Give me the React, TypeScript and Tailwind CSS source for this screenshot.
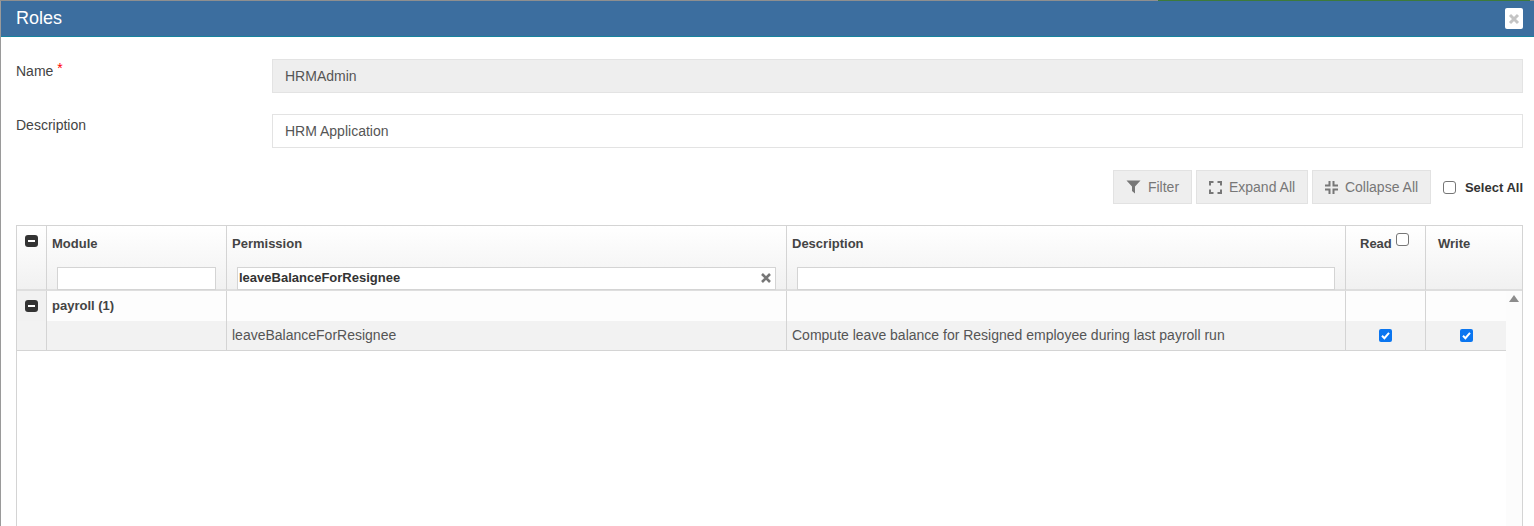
import React from "react";

function Minus() {
  return (
    <span className="flex h-[12px] w-[13px] items-center justify-center rounded-[3px] bg-[#333333]">
      <span className="h-[2px] w-[7px] bg-white" />
    </span>
  );
}

function Blue() {
  return (
    <span className="flex h-[13px] w-[13px] items-center justify-center rounded-[2px] bg-[#0b76f0]">
      <svg width="11" height="11" viewBox="0 0 11 11" fill="none">
        <path d="M2 5.8 L4.4 8.2 L9 2.8" stroke="white" strokeWidth="2" />
      </svg>
    </span>
  );
}

function Box() {
  return <span className="block h-[13px] w-[13px] rounded-[3px] border border-[#767676] bg-white" />;
}

function ToolButton({ icon, label, w }: { icon: React.ReactNode; label: string; w: string }) {
  return (
    <div className={`flex h-[34px] items-center gap-[7px] border border-[#e2e2e2] bg-[#eeeeee] pl-[12px] text-[14px] text-[#777777] ${w}`}>
      {icon}
      <span>{label}</span>
    </div>
  );
}

const cell = "border-r border-[#d4d4d4]";

export default function App() {
  return (
    <div className="h-[526px] w-[1534px] overflow-hidden bg-white font-['Liberation_Sans',Arial,sans-serif] text-[14px] text-[#333333]">
      <div className="flex h-[1px] bg-[#8f8f8f]">
        <div className="w-[1158px]" />
        <div className="w-[372px] bg-[#3d7a3a]" />
      </div>
      <div className="h-[525px] border-l border-[#9a9a9a]">
        <div className="flex h-[36px] items-center justify-between border-b border-[#17839e] bg-[#3c6e9f] pl-[15px] pr-[11px]">
          <span className="text-[18px] text-white">Roles</span>
          <span className="flex h-[21px] w-[18px] items-center justify-center rounded-[2px] bg-white text-[#c4c4c4]">
            <svg width="12" height="12" viewBox="0 0 12 12"><path d="M2 2 L10 10 M10 2 L2 10" stroke="currentColor" strokeWidth="3" /></svg>
          </span>
        </div>

        <div className="px-[15px] pr-[11px]">
          <div className="mt-[22px] flex h-[34px]">
            <div className="w-[256px] pt-[2px] text-[14px] text-[#444444]">
              Name <span className="relative -top-[3px] text-[#ff0000]">*</span>
            </div>
            <div className="flex flex-1 items-center border border-[#e3e3e3] bg-[#eeeeee] pl-[12px] text-[#555555]">HRMAdmin</div>
          </div>
          <div className="mt-[21px] flex h-[34px]">
            <div className="w-[256px] pt-[1px] text-[#444444]">Description</div>
            <div className="flex flex-1 items-center border border-[#e3e3e3] pl-[12px] text-[#555555]">HRM Application</div>
          </div>

          <div className="mt-[22px] flex h-[34px] items-start justify-end">
            <ToolButton
              w="w-[79px]"
              label="Filter"
              icon={
                <svg width="15" height="14" viewBox="0 0 15 14"><path d="M0.5 0.5 H14.5 L9 6.5 V13.5 L6 11 V6.5 Z" fill="#777777" /></svg>
              }
            />
            <div className="w-[4px]" />
            <ToolButton
              w="w-[112px]"
              label="Expand All"
              icon={
                <svg width="13" height="13" viewBox="0 0 13 13" fill="none" stroke="#777777" strokeWidth="2"><path d="M1 4.5 V1 H4.5 M8.5 1 H12 V4.5 M12 8.5 V12 H8.5 M4.5 12 H1 V8.5" /></svg>
              }
            />
            <div className="w-[4px]" />
            <ToolButton
              w="w-[119px]"
              label="Collapse All"
              icon={
                <svg width="13" height="13" viewBox="0 0 13 13" fill="none" stroke="#777777" strokeWidth="2"><path d="M0 4.5 H4.5 V0 M8.5 0 V4.5 H13 M13 8.5 H8.5 V13 M4.5 13 V8.5 H0" /></svg>
              }
            />
            <label className="ml-[12px] flex items-center pt-[8px] text-[#333333]">
              <Box />
              <span className="ml-[9px] text-[13px] font-bold">Select All</span>
            </label>
          </div>

          <div className="mt-[21px] h-[302px] border border-[#d4d4d4]">
            <div className="grid h-[65px] grid-cols-[30px_180px_560px_559px_80px_1fr] border-b-2 border-[#dedede] bg-gradient-to-b from-white to-[#f1f1f1] text-[13px] font-bold text-[#444444]">
              <div className={`${cell} flex justify-center pt-[9px]`}><Minus /></div>
              <div className={`${cell} pl-[5px] pt-[8px]`}>
                <div>Module</div>
                <div className="ml-[5px] mt-[13px] h-[23px] w-[159px] border border-[#d4d4d4] bg-white" />
              </div>
              <div className={`${cell} pl-[5px] pt-[8px]`}>
                <div>Permission</div>
                <div className="ml-[5px] mt-[13px] flex h-[23px] w-[539px] items-center justify-between border border-[#d4d4d4] bg-white pl-[1px] pr-[4px] text-[#333333]">
                  <span>leaveBalanceForResignee</span>
                  <svg width="10" height="10" viewBox="0 0 10 10"><path d="M1 1 L9 9 M9 1 L1 9" stroke="#777777" strokeWidth="2.6" /></svg>
                </div>
              </div>
              <div className={`${cell} pl-[5px] pt-[8px]`}>
                <div>Description</div>
                <div className="ml-[5px] mt-[13px] h-[23px] w-[538px] border border-[#d4d4d4] bg-white" />
              </div>
              <div className={`${cell} flex items-start pl-[14px] pt-[8px]`}>
                <span>Read</span>
                <span className="ml-[4px] mt-[-1px]"><Box /></span>
              </div>
              <div className="pl-[12px] pt-[8px]">Write</div>
            </div>

            <div className="flex h-[235px]">
              <div className="w-[1489px]">
                <div className="grid h-[30px] grid-cols-[30px_180px_560px_559px_80px_1fr] bg-[#fdfdfd] text-[13px] font-bold text-[#444444]">
                  <div className={`${cell} flex items-center justify-center bg-[#f1f1f1]`}><Minus /></div>
                  <div className={`${cell} flex items-center pl-[5px]`}>payroll (1)</div>
                  <div className={cell} />
                  <div className={cell} />
                  <div className={cell} />
                  <div />
                </div>
                <div className="grid h-[30px] grid-cols-[30px_180px_560px_559px_80px_1fr] border-b border-[#d4d4d4] bg-[#f2f2f2] text-[#555555]">
                  <div className={cell} />
                  <div className={cell} />
                  <div className={`${cell} flex items-center pl-[5px]`}>leaveBalanceForResignee</div>
                  <div className={`${cell} flex items-center pl-[5px]`}>Compute leave balance for Resigned employee during last payroll run</div>
                  <div className={`${cell} flex items-center justify-center`}><Blue /></div>
                  <div className="flex items-center justify-center"><Blue /></div>
                </div>
              </div>
              <div className="flex flex-1 justify-center bg-[#fcfcfc] pt-[4px]">
                <span className="h-0 w-0 border-x-[5px] border-b-[7px] border-x-transparent border-b-[#8c8c8c]" />
              </div>
            </div>
          </div>
        </div>
      </div>
    </div>
  );
}
